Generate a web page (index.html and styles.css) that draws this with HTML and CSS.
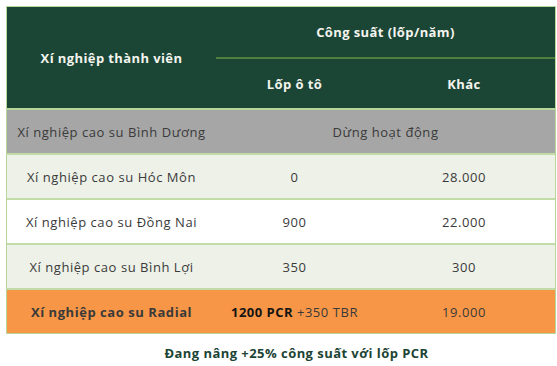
FILE: index.html
```html
<!DOCTYPE html>
<html lang="vi">
<head>
<meta charset="utf-8">
<link rel="stylesheet" href="styles.css">
</head>
<body>
<div class="page">
  <table class="capacity">
    <colgroup>
      <col class="c-member">
      <col class="c-car">
      <col class="c-other">
    </colgroup>
    <thead>
      <tr>
        <th rowspan="2" class="member">Xí nghiệp thành viên</th>
        <th colspan="2" class="group">Công suất (lốp/năm)</th>
      </tr>
      <tr class="sub">
        <th>Lốp ô tô</th>
        <th>Khác</th>
      </tr>
    </thead>
    <tbody>
      <tr class="row-stopped">
        <td>Xí nghiệp cao su Bình Dương</td>
        <td colspan="2">Dừng hoạt động</td>
      </tr>
      <tr class="row-light">
        <td>Xí nghiệp cao su Hóc Môn</td>
        <td>0</td>
        <td>28.000</td>
      </tr>
      <tr class="row-white">
        <td>Xí nghiệp cao su Đồng Nai</td>
        <td>900</td>
        <td>22.000</td>
      </tr>
      <tr class="row-light">
        <td>Xí nghiệp cao su Bình Lợi</td>
        <td>350</td>
        <td>300</td>
      </tr>
      <tr class="row-highlight">
        <td class="strong">Xí nghiệp cao su Radial</td>
        <td><span class="strong">1200 PCR</span> +350 TBR</td>
        <td>19.000</td>
      </tr>
    </tbody>
  </table>
  <p class="note">Đang nâng +25% công suất với lốp PCR</p>
</div>
</body>
</html>
```
FILE: styles.css
```css
html, body {
  margin: 0;
  padding: 0;
  background: #ffffff;
}

.page {
  padding: 6px 0 0 6px;
  font-family: "Open Sans", "DejaVu Sans", sans-serif;
}

.capacity {
  width: 550px;
  border-collapse: separate;
  border-spacing: 0;
  border: 1.5px solid #b7d69b;
  table-layout: fixed;
}

.c-member {
  width: 209px;
}

.c-car {
  width: 157px;
}

.capacity th,
.capacity td {
  padding: 0;
  text-align: center;
  vertical-align: middle;
}

.capacity thead th {
  background: #1b4535;
  color: #f4f4ee;
  font-weight: 700;
  font-size: 13px;
  letter-spacing: 0.4px;
}

.capacity .member {
  border-bottom: 2px solid #b7d69b;
}

.capacity .group {
  height: 50px;
  border-bottom: 2px solid #4f7f3c;
}

.capacity .sub th {
  height: 49px;
  border-bottom: 2px solid #b7d69b;
}

.capacity tbody td {
  height: 43px;
  font-size: 13px;
  letter-spacing: 0.55px;
  color: #3a3a3a;
  border-bottom: 2px solid #c2dca8;
}

.capacity tbody tr:last-child td {
  border-bottom: 0;
}

.row-stopped td {
  background: #a6a6a6;
}

.row-light td {
  background: #eef1e8;
}

.row-white td {
  background: #ffffff;
}

.row-highlight td {
  background: #f79646;
  color: #1e1e1e;
}

.strong {
  font-weight: 700;
  color: #141414;
  letter-spacing: 0.48px;
}

.note {
  margin: 10px 0 0;
  padding-left: 31px;
  width: 550px;
  box-sizing: border-box;
  text-align: center;
  font-size: 13px;
  font-weight: 700;
  letter-spacing: 0.45px;
  color: #1c4434;
}
```
